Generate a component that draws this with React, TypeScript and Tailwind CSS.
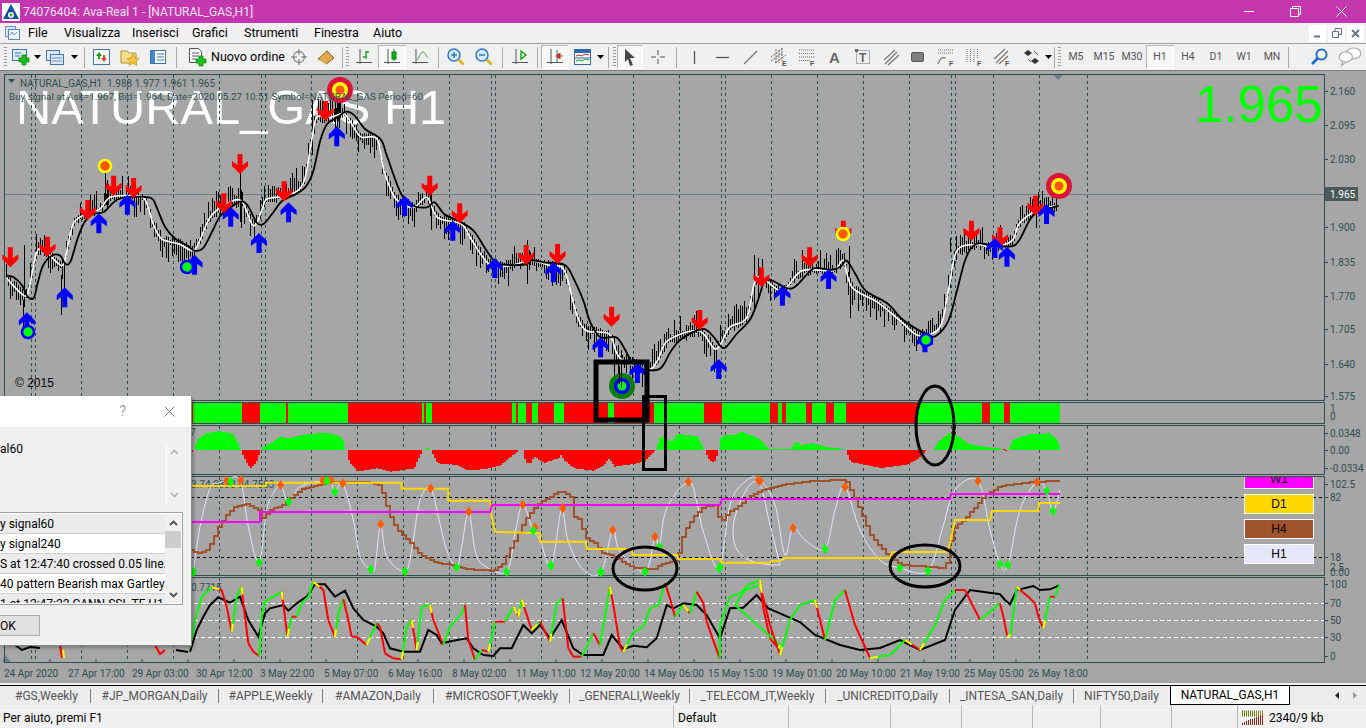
import React from "react";

type P = [number, number];
const A = (p: P[]): P[] => p.map(([x, y]) => [x / 2.904, 74 + y / 3]);
const B = (p: P[]): P[] => p.map(([x, y]) => [530 + x / 2.904, 74 + y / 3]);
const C = (p: P[]): P[] => p.map(([x, y]) => [190 + x / 3, 400 + y / 3]);
const D = (p: P[]): P[] => p.map(([x, y]) => [540 + x / 3, 475 + y / 3]);
const E = (p: P[]): P[] => p.map(([x, y]) => [1000 + x / 3, 390 + y / 3]);
const F = (p: P[]): P[] => p.map(([x, y]) => [560 + x / 3, 340 + y / 3]);
const pts = (p: P[]) => p.map(([x, y]) => `${x.toFixed(1)},${y.toFixed(1)}`).join(" ");
const hash = (n: number) => {
  const s = Math.sin(n * 12.9898) * 43758.5453;
  return s - Math.floor(s);
};
const interp = (p: P[], x: number) => {
  if (x <= p[0][0]) return p[0][1];
  for (let i = 1; i < p.length; i++) {
    if (x <= p[i][0]) {
      const d = p[i][0] - p[i - 1][0] || 1;
      return p[i - 1][1] + ((p[i][1] - p[i - 1][1]) * (x - p[i - 1][0])) / d;
    }
  }
  return p[p.length - 1][1];
};
const smooth = (p: P[]) => {
  let d = `M${p[0][0].toFixed(1)} ${p[0][1].toFixed(1)}`;
  for (let i = 0; i < p.length - 1; i++) {
    const p0 = p[i - 1] || p[i], p1 = p[i], p2 = p[i + 1], p3 = p[i + 2] || p2;
    const cx1 = Math.min(Math.max(p1[0] + (p2[0] - p0[0]) / 6, p1[0]), p2[0]);
    const cy1 = p1[1] + (p2[1] - p0[1]) / 6;
    const cx2 = Math.min(Math.max(p2[0] - (p3[0] - p1[0]) / 6, p1[0]), p2[0]);
    const cy2 = p2[1] - (p3[1] - p1[1]) / 6;
    d += `C${cx1.toFixed(1)} ${cy1.toFixed(1)} ${cx2.toFixed(1)} ${cy2.toFixed(1)} ${p2[0].toFixed(1)} ${p2[1].toFixed(1)}`;
  }
  return d;
};
const stair = (p: P[], step: number) => {
  let d = `M${p[0][0].toFixed(0)} ${p[0][1].toFixed(0)}`;
  for (let x = p[0][0] + step; x < p[p.length - 1][0]; x += step) {
    d += `H${x.toFixed(0)}V${interp(p, x).toFixed(0)}`;
  }
  d += `H${p[p.length - 1][0].toFixed(0)}V${p[p.length - 1][1].toFixed(0)}`;
  return d;
};
const hist = (p: P[], zero: number) => {
  let d = `M${p[0][0].toFixed(0)} ${zero}`;
  for (let x = p[0][0]; x < p[p.length - 1][0]; x += 2) {
    d += `H${x.toFixed(0)}V${interp(p, x).toFixed(0)}`;
  }
  return d + `H${p[p.length - 1][0].toFixed(0)}V${zero}Z`;
};

const GRID = [31, 35, 81, 127, 173, 219, 261, 265, 311, 357, 403, 449, 491, 495, 541, 587, 633, 679, 721, 725, 771, 817, 863, 909, 951, 955, 993, 1039, 1087];

const blackLine: P[] = [
  ...A([[18,604],[40,610],[65,635],[80,668],[98,672],[110,625],[125,575],[150,545],[175,545],[190,570],[205,562],[225,495],[245,445],[270,420],[300,415],[320,395],[345,375],[400,368],[440,373],[455,400],[480,460],[510,495],[545,515],[565,530],[590,522],[615,475],[640,425],[670,400],[700,382],[720,395],[745,445],[765,450],[790,420],[820,380],[860,360],[890,335],[910,290],[930,200],[950,150],[980,130],[1005,113],[1030,125],[1060,165],[1105,195],[1125,250],[1165,360],[1200,395],[1240,400],[1262,385],[1290,420],[1330,440],[1375,470],[1410,525],[1440,565],[1480,573],[1530,570]]),
  ...B([[0,558],[40,565],[100,572],[125,610],[155,680],[175,745],[205,790],[250,790],[275,825],[300,870],[340,888],[380,882],[410,830],[440,795],[500,765],[530,785],[555,818],[570,818],[600,780],[640,735],[665,670],[680,622],[700,618],[745,642],[770,638],[810,595],[830,582],[880,587],[905,575],[920,560],[945,600],[975,650],[1040,690],[1080,735],[1150,780],[1180,785],[1215,740],[1240,650],[1265,555],[1295,510],[1350,515],[1410,512],[1450,440],[1475,415],[1535,395]]),
];
const whiteLine: P[] = [
  ...A([[18,612],[70,665],[85,640],[105,540],[125,525],[165,565],[185,570],[200,500],[215,445],[250,420],[290,405],[320,370],[380,365],[420,375],[445,450],[470,495],[520,510],[560,530],[580,500],[610,430],[650,395],[700,380],[735,455],[760,410],[775,375],[830,365],[880,330],[905,200],[920,130],[960,130],[1000,120],[1030,165],[1050,190],[1095,195],[1115,290],[1150,375],[1200,400],[1240,370],[1270,430],[1340,450],[1365,490],[1420,570],[1480,575],[1530,560]]),
  ...B([[0,558],[60,575],[100,590],[135,720],[165,770],[230,780],[260,850],[340,885],[370,860],[400,800],[490,770],[540,825],[580,760],[630,730],[660,610],[730,650],[790,590],[880,590],[910,560],[935,640],[1010,685],[1080,745],[1130,785],[1190,760],[1215,650],[1240,530],[1300,512],[1340,520],[1400,500],[1420,450],[1470,410],[1530,395]]),
];
const spikes: number[][] = [
  [105,170,205],[107,180,210],[240,170,222],[241,190,228],[335,100,140],[337,90,135],[339,90,128],[312,100,155],[430,185,212],[431,190,230],[527,240,284],[529,250,270],
  [614,336,384],[618,345,392],[621,350,397],[714,350,372],[849,246,277],[850,280,318],[754,255,312],[758,258,300],[24,245,300],[23,300,330],[64,265,300],[61,275,315],[36,240,255],[190,240,255],[1036,206,228],[950,238,252],
];
const candleD = (() => {
  let d = "";
  for (let x = 6; x < 1058; x += 2) {
    const y = interp(whiteLine, x);
    const prev = interp(whiteLine, x - 10);
    const fall = y > prev ? 1 : 0;
    const t = y - 1 - hash(x) * (fall ? 5 : 20);
    const b = y + 1 + hash(x + 0.37) * (fall ? 20 : 5);
    d += `M${x + 0.5} ${t.toFixed(0)}V${b.toFixed(0)}`;
  }
  spikes.forEach(([x, t, b]) => (d += `M${x + 0.5} ${t}V${b}`));
  return d;
})();

const redArrows: P[] = [
  ...A([[30,550],[138,518],[255,408],[330,335],[388,342],[650,388],[697,270],[825,352],[945,110],[1248,335],[1335,418],[1528,543]]),
  ...B([[80,540],[237,728],[493,738],[672,610],[812,550],[910,470],[1282,470],[1365,490],[1468,395]]),
];
const blueArrows: P[] = [
  ...A([[78,745],[188,670],[287,448],[370,392],[565,572],[670,428],[752,507],[838,415],[978,187],[1175,395],[1315,470],[1437,582]]),
  ...B([[68,595],[205,820],[312,897],[548,885],[733,665],[867,615],[1147,805],[1350,522],[1385,548],[1500,420]]),
];

const barBounds = [193,242,260,286,288,348,422,424,426,432,512,516,518,526,532,538,554,564,608,614,654,704,722,770,778,782,786,806,812,826,834,846,918,982,990,1004,1010,1060];

const greenHist: P[][] = [
  C([[10,150],[20,120],[45,100],[85,93],[125,100],[140,125],[150,150]]),
  C([[210,150],[215,140],[240,130],[265,110],[290,115],[330,105],[400,98],[440,105],[455,115],[465,150]]),
  C([[700,150],[710,143],[718,150]]),
  F([[284,330],[295,295],[310,288],[330,305],[350,282],[380,285],[410,290],[430,330]]),
  F([[475,330],[482,287],[520,285],[545,275],[580,290],[600,300]]),
  [[760,440],[768,449],[790,449],[795,441],[800,445],[812,443],[825,447],[845,449]],
  [[932,450],[937,442],[948,433],[958,437],[968,444],[985,447],[1003,449]],
  E([[25,178],[35,150],[60,140],[90,132],[150,130],[170,150],[180,178]]),
];
const redHist: P[][] = [
  C([[0,150],[2,172],[8,150]]),
  C([[150,150],[160,175],[178,205],[195,190],[210,150]]),
  C([[468,150],[475,185],[500,215],[560,205],[600,215],[670,205],[695,150]]),
  C([[720,150],[740,190],[800,195],[830,210],[880,208],[930,195],[985,150]]),
  C([[996,150],[1005,190],[1020,190],[1030,170],[1060,190],[1090,178],[1110,172]]),
  F([[0,345],[10,360],[40,385],[100,392],[130,375],[145,355],[160,380],[190,375],[220,372],[250,365],[270,345],[284,330]]),
  F([[432,330],[445,360],[460,368],[475,330]]),
  [[845,450],[850,462],[880,468],[905,465],[918,458],[926,450]],
  E([[10,178],[15,185],[22,180]]),
];

const to780 = (p: P[]) => p.filter((q) => q[0] < 540);
const magenta: P[] = [[190,522],[260,522],[260,512],[490,512],[492,505],[720,505],[722,499],[950,499],[951,494],[1060,494]];
const yellow: P[] = [
  ...to780(C([[0,258],[228,258],[228,248],[635,248],[635,266],[775,266],[775,302],[900,302],[905,350],[915,395],[1050,395]])),
  ...D([[0,175],[0,200],[137,200],[140,222],[275,222],[278,240],[412,240],[415,252],[540,252],[545,263],[690,263],[695,258],[720,258]]),
  [785,558],[890,558],[892,552],[948,552],[955,520],[990,520],[992,511],[1038,511],[1039,503],[1060,503],
];
const brown: P[] = [
  ...to780(C([[0,450],[20,458],[45,455],[65,425],[85,380],[105,350],[130,320],[170,312],[205,330],[215,355],[245,325],[270,320],[300,295],[340,265],[400,250],[440,245],[520,245],[570,258],[580,295],[600,350],[620,390],[660,430],[690,465],[730,485],[800,500],[850,510],[910,512],[935,495],[965,435],[1010,350]])),
  ...D([[0,80],[30,65],[55,50],[70,50],[95,70],[100,125],[120,135],[125,160],[140,195],[160,200],[185,235],[210,240],[250,262],[280,278],[340,282],[370,265],[410,258],[420,200],[440,155],[465,120],[490,95],[530,90],[535,135],[550,135],[560,115],[600,90],[625,65],[680,40],[720,30]]),
  [810,481],[845,480],[855,500],[870,535],[885,553],[900,565],[945,568],[952,530],[965,518],[985,495],[1000,486],[1030,482],[1060,481],
];
const thinWhite: P[] = [
  ...to780(C([[10,515],[30,380],[60,265],[85,250],[105,242],[150,240],[175,380],[207,487],[230,330],[250,280],[272,256],[295,305],[330,260],[395,242],[420,240],[435,275],[458,250],[490,360],[510,470],[542,508],[555,500],[572,373],[590,470],[645,514],[665,450],[690,300],[722,265],[745,350],[770,450],[800,502],[815,440],[836,335],[855,450],[880,495],[950,515],[975,400],[998,314],[1030,392]])),
  ...D([[0,195],[33,272],[60,120],[68,100],[85,200],[130,285],[183,292],[218,165],[240,230],[315,290],[345,185],[358,215],[380,100],[445,20],[470,80],[490,170],[537,280],[570,90],[610,25],[655,15],[690,150],[720,270]]),
  [733,530],[745,492],[760,481],[775,505],[785,555],[793,528],[805,540],[825,549],[835,510],[845,487],[860,530],[880,560],[900,568],[928,571],[942,530],[955,490],[978,481],[990,530],[1000,564],[1008,565],[1020,510],[1037,482],[1047,491],[1053,511],[1060,490],
];
const orangeD: P[] = [
  ...to780(C([[110,242],[152,240],[272,256],[398,241],[423,240],[458,250],[572,373],[722,265],[836,335],[998,314],[1035,382]])),
  ...C([[1118,325]]),
  ...D([[68,100],[218,165],[345,185],[445,20],[655,15]]),
  [760,481],[793,528],[845,487],[978,481],[1037,482],
];
const greenD: P[] = [
  ...to780(C([[10,516],[122,245],[207,487],[296,305],[411,243],[435,275],[542,508],[645,514],[800,502],[950,515],[1030,392]])),
  ...C([[1083,496],[1232,515]]),
  ...D([[33,272],[183,292],[315,290],[358,215],[537,280]]),
  [825,549],[900,568],[928,571],[1000,564],[1008,565],[1047,491],[1053,511],[720,567],
];

const multi: P[] = [
  ...to780(C([[0,740],[15,660],[35,590],[65,562],[95,570],[110,620],[125,695],[140,590],[155,560],[160,610],[175,730],[190,755],[208,768],[215,650],[225,605],[275,575],[285,650],[292,710],[305,650],[320,650],[335,610],[355,590],[370,545],[400,570],[415,660],[435,712],[445,640],[460,598],[475,660],[485,710],[500,710],[530,735],[560,670],[570,680],[585,760],[610,775],[635,778],[650,680],[665,660],[680,750],[695,620],[720,615],[730,660],[760,735],[780,680],[815,640],[825,615],[835,720],[855,780],[875,750],[895,755],[915,665],[945,665],[970,620],[985,650],[995,598],[1025,690]])),
  ...D([[0,440],[30,500],[50,385],[68,370],[85,520],[100,545],[125,545],[160,475],[180,510],[210,335],[220,390],[240,515],[250,530],[280,472],[310,455],[330,400],[355,390],[375,325],[390,370],[405,425],[430,390],[450,415],[470,350],[490,385],[500,440],[539,550],[540,450],[570,365],[600,355],[625,330],[660,315],[670,400],[690,490],[715,520],[720,510]]),
  [735,605],[745,590],[760,585],[770,625],[780,655],[790,620],[800,605],[815,600],[825,640],[835,600],[845,590],[855,625],[870,658],[890,655],[905,640],[920,650],[935,625],[945,600],[955,590],[965,590],[980,620],
  ...E([[0,640],[10,680],[22,740],[32,735],[50,590],[60,600],[85,620],[105,640],[115,680],[130,715],[150,620],[165,620],[178,585]]),
];
const blackStoch: P[] = [
  ...to780(C([[0,755],[20,690],[40,650],[60,615],[85,592],[120,608],[150,590],[175,660],[205,710],[225,640],[240,625],[280,615],[295,632],[320,610],[350,590],[375,553],[405,553],[435,590],[465,572],[490,625],[520,660],[560,680],[580,700],[600,745],[640,755],[690,755],[715,690],[740,705],[755,730],[790,722],[830,715],[850,745],[880,765],[910,768],[930,745],[965,745],[1000,675],[1025,700]])),
  ...D([[0,450],[30,490],[65,435],[100,520],[130,540],[190,540],[215,480],[250,522],[280,512],[320,517],[350,490],[380,390],[400,400],[430,385],[470,390],[500,420],[540,490],[570,400],[610,398],[650,360],[685,400],[720,415]]),
  [800,622],[815,635],[840,645],[860,650],[880,648],[900,640],[920,650],[945,640],[955,610],[970,590],
  ...E([[0,613],[15,630],[30,643],[50,600],[100,588],[120,600],[150,598],[178,586]]),
];
const multiSegs = (() => {
  const out: { a: P; b: P; c: string }[] = [];
  for (let i = 1; i < multi.length; i++) {
    const a = multi[i - 1], b = multi[i];
    out.push({ a, b, c: b[1] < a[1] ? "#00ff00" : "#ff0000" });
  }
  for (let i = 1; i < multi.length - 1; i++) {
    const a = multi[i - 1], m = multi[i], b = multi[i + 1];
    if ((m[1] - a[1]) * (b[1] - m[1]) < 0 && hash(i) > 0.3) {
      const len = Math.hypot(b[0] - m[0], b[1] - m[1]) || 1;
      const t = Math.min(1, 8 / len);
      out.push({ a: m, b: [m[0] + (b[0] - m[0]) * t, m[1] + (b[1] - m[1]) * t], c: "#ffff00" });
    }
  }
  return out;
})();

const Grid = ({ y1, y2 }: { y1: number; y2: number }) => (
  <path d={GRID.map((x) => `M${x + 0.5} ${y1}V${y2}`).join("")} stroke="#2f4f4f" strokeWidth={1} strokeDasharray="3 3" fill="none" />
);
const AxisText = ({ y, t }: { y: number; t: string }) => (
  <text x={1330} y={y + 3.5} fontSize={10} fill="#2f4f4f">{t}</text>
);
const Tick = ({ y }: { y: number }) => <path d={`M1324 ${y + 0.5}H1328`} stroke="#2f4f4f" />;

const Pane = ({ y, h, cls, children }: { y: number; h: number; cls: string; children: React.ReactNode }) => (
  <div className={`relative ml-[4px] w-[1321px] border border-[#2f4f4f] ${cls}`}>
    <svg viewBox={`5 ${y + 1} 1319 ${h - 2}`} width={1319} height={h - 2} className="block overflow-visible font-[family-name:Roboto,sans-serif]">
      {children}
    </svg>
  </div>
);

const UpArrow = ({ x, y }: { x: number; y: number }) => (
  <path d={`M${x} ${y - 10}l8 8l0 5l-5.500 -4v11h-5v-11l-5.500 4l0 -5z`} fill="#0000ff" />
);
const DownArrow = ({ x, y }: { x: number; y: number }) => (
  <path d={`M${x} ${y + 10}l8 -8l0 -5l-5.500 4v-11h-5v11l-5.500 -4l0 5z`} fill="#ff0000" />
);
const Diamond = ({ x, y, c }: { x: number; y: number; c: string }) => (
  <path d={`M${x} ${y - 5}l3.500 5l-3.500 5l-3.500 -5z`} fill={c} />
);

const MainChart = () => (
  <Pane y={74} h={327} cls="h-[327px]">
    <text x={16} y={124} fontSize={48.8} fill="#ffffff" className="font-[family-name:'Liberation_Sans',sans-serif]">NATURAL_GAS H1</text>
    <text x={1195} y={122} fontSize={51} fill="#00ff00" className="font-[family-name:'Liberation_Sans',sans-serif]">1.965</text>
    <Grid y1={75} y2={400} />
    <path d="M5 194.500H1324" stroke="#6e7f80" />
    <path d={candleD} stroke="#000000" strokeWidth={1} fill="none" />
    <path d={smooth(whiteLine)} fill="none" stroke="#ffffff" strokeWidth={1.6} />
    <path d={smooth(blackLine)} fill="none" stroke="#000000" strokeWidth={1.8} />
    {redArrows.map(([x, y], i) => <DownArrow key={i} x={x} y={y} />)}
    {blueArrows.map(([x, y], i) => <UpArrow key={i} x={x} y={y} />)}
    {[[28,332],[187,267],[926,340]].map(([x, y], i) => (
      <circle key={i} cx={x} cy={y} r={6} fill="#00ff00" stroke="#0000ff" strokeWidth={2.5} />
    ))}
    {[[105,166],[843,234]].map(([x, y], i) => (
      <circle key={i} cx={x} cy={y} r={6} fill="#ff5500" stroke="#ffff00" strokeWidth={2.5} />
    ))}
    {[[340,90],[1059,186]].map(([x, y], i) => (
      <g key={i}>
        <circle cx={x} cy={y} r={13} fill="#dc143c" />
        <circle cx={x} cy={y} r={8} fill="#ffff00" />
        <circle cx={x} cy={y} r={4.5} fill="#ff5500" />
      </g>
    ))}
    <circle cx={622} cy={386} r={13} fill="#0a7d0a" />
    <circle cx={622} cy={386} r={8} fill="#0000ff" />
    <circle cx={622} cy={386} r={4.5} fill="#00ff00" />
    <path d="M621.500 372V388M619.500 366V384" stroke="#000" />
    <path d="M8 79h7l-3.500 4z" fill="#2f4f4f" />
    <text x={20} y={86.5} fontSize={10} fill="#2f4f4f" xmlSpace="preserve">NATURAL_GAS,H1  1.988 1.977 1.961 1.965</text>
    <text x={9} y={99.5} fontSize={9.85} fill="#2f4f4f">Buy signal at Ask=1.967, Bid=1.964, Date=2020.05.27 10:51 Symbol=NATURAL_GAS Period=60</text>
    <text x={15} y={387} fontSize={12} fill="#000000" className="font-[family-name:'Liberation_Sans',sans-serif]">© 2015</text>
    <path d="M1053 75h10l-5 5z" fill="#708090" />
    {[[91,"2.160"],[125,"2.095"],[159,"2.030"],[227,"1.900"],[262,"1.835"],[296,"1.770"],[329,"1.705"],[364,"1.640"],[396,"1.575"]].map(([y, t]) => (
      <g key={t as string}><Tick y={y as number} /><AxisText y={y as number} t={t as string} /></g>
    ))}
    <path d="M1325 187H1358V201H1325Z" fill="#4a5a5a" />
    <text x={1330} y={197.5} fontSize={10} fill="#ffffff">1.965</text>
  </Pane>
);

const SignalBar = () => (
  <Pane y={402} h={22} cls="h-[22px] mt-[1px]">
    {barBounds.map((x, i) => {
      const s = i === 0 ? 190 : barBounds[i - 1];
      return <rect key={i} x={s} y={403} width={x - s} height={20} fill={i % 2 === 0 ? "#ff0000" : "#00ff00"} />;
    })}
    <AxisText y={408} t="1" />
    <AxisText y={416} t="0" />
  </Pane>
);

const HistPane = () => (
  <Pane y={425} h={50} cls="h-[50px] mt-[1px]">
    <Grid y1={426} y2={474} />
    {greenHist.map((p, i) => <path key={i} d={hist(p, 450)} fill="#00ff00" />)}
    {redHist.map((p, i) => <path key={i} d={hist(p, 450)} fill="#ff0000" />)}
    <text x={190} y={436} fontSize={10} fill="#2f4f4f">7</text>
    {[[433,"0.0348"],[450,"0.00"],[468,"-0.0334"]].map(([y, t]) => (
      <g key={t as string}><Tick y={y as number} /><AxisText y={y as number} t={t as string} /></g>
    ))}
  </Pane>
);

const Legend = ({ t, cls }: { t: string; cls: string }) => (
  <div className={`flex h-[20px] w-[70px] shrink-0 items-center justify-center border border-white text-[12px] text-black ${cls}`}>{t}</div>
);

const StochPane = () => (
  <Pane y={476} h={100} cls="h-[100px] mt-[1px]">
    <Grid y1={477} y2={575} />
    <path d="M5 497.500H1324M5 557.500H1324" stroke="#000" strokeDasharray="3 3" fill="none" />
    <text x={191} y={488} fontSize={10} fill="#2f4f4f">3.74.9330 84.7503</text>
    <path d={smooth(thinWhite)} fill="none" stroke="#e6e6fa" strokeWidth={1} />
    <path d={stair(brown, 4)} fill="none" stroke="#a0522d" strokeWidth={2} />
    <polyline points={pts(yellow)} fill="none" stroke="#ffd700" strokeWidth={2} />
    <polyline points={pts(magenta)} fill="none" stroke="#ff00ff" strokeWidth={2} />
    {orangeD.map(([x, y], i) => <Diamond key={i} x={x} y={y} c="#ff5a00" />)}
    {greenD.map(([x, y], i) => <Diamond key={i} x={x} y={y} c="#00ff00" />)}
    <Tick y={484} /><AxisText y={484} t="102.5" />
    <Tick y={497} /><AxisText y={497} t="82" />
    <Tick y={557} /><AxisText y={557} t="18" />
    <AxisText y={567} t="2.5" />
    <AxisText y={572} t="0.00" />
  </Pane>
);

const LegendBox = () => (
  <div className="absolute left-[1240px] top-[-8px] flex flex-col gap-[5px] font-[family-name:'Liberation_Sans',sans-serif]">
    <Legend t="W1" cls="bg-[#ff00ff]" />
    <Legend t="D1" cls="bg-[#ffd700]" />
    <Legend t="H4" cls="bg-[#a0522d]" />
    <Legend t="H1" cls="bg-[#e6e6fa]" />
  </div>
);

const StochWrap = () => (
  <div className="relative">
    <StochPane />
    <div className="absolute left-[4px] top-[2px] h-[98px] w-[1320px] overflow-hidden">
      <div className="relative h-full w-full">
        <LegendBox />
      </div>
    </div>
  </div>
);

const RsiPane = () => (
  <Pane y={577} h={86} cls="h-[86px] mt-[1px]">
    <Grid y1={578} y2={662} />
    <path d="M5 603.500H1324M5 620.500H1324M5 637.500H1324" stroke="#ffffff" strokeDasharray="4 3" fill="none" />
    <text x={191} y={591} fontSize={10} fill="#2f4f4f">0.7715</text>
    <polyline points={pts(blackStoch)} fill="none" stroke="#000" strokeWidth={2} />
    {multiSegs.map((s, i) => (
      <line key={i} x1={s.a[0]} y1={s.a[1]} x2={s.b[0]} y2={s.b[1]} stroke={s.c} strokeWidth={2} />
    ))}
    <polyline points="15,645 22,650 30,647 40,648" fill="none" stroke="#000" strokeWidth={2} />
    <polyline points="60,645 62,658" fill="none" stroke="#ff0000" strokeWidth={2} />
    <polyline points="63,650 64,658" fill="none" stroke="#ffff00" strokeWidth={2} />
    <polyline points="155,645 160,654 165,650" fill="none" stroke="#ff0000" strokeWidth={2} />
    <polyline points="176,650 188,652" fill="none" stroke="#000" strokeWidth={2} />
    {[[584,"100"],[603,"70"],[620,"50"],[637,"30"],[656,"0"]].map(([y, t]) => (
      <g key={t as string}><Tick y={y as number} /><AxisText y={y as number} t={t as string} /></g>
    ))}
    <path d={Array.from({ length: 23 }, (_, i) => `M${4 + i * 46} 659V662`).join("")} stroke="#2f4f4f" />
    <path d="M5 655V662H11Z" fill="#708090" />
  </Pane>
);

const TIMES = ["24 Apr 2020","27 Apr 17:00","29 Apr 03:00","30 Apr 12:00","3 May 22:00","5 May 07:00","6 May 16:00","8 May 02:00","11 May 11:00","12 May 20:00","14 May 06:00","15 May 15:00","19 May 01:00","20 May 10:00","21 May 19:00","25 May 05:00","26 May 18:00"];

const Annotations = () => (
  <svg className="pointer-events-none absolute left-0 top-0 h-[728px] w-[1366px]" viewBox="0 0 1366 728" fill="none" stroke="#000">
    <rect x={596} y={362} width={51} height={58} strokeWidth={5} />
    <rect x={643.5} y={396.5} width={22} height={73} strokeWidth={3} />
    <ellipse cx={935} cy={425.5} rx={19} ry={39.5} strokeWidth={3} />
    <ellipse cx={645} cy={568.5} rx={32} ry={21.5} strokeWidth={3} />
    <ellipse cx={925} cy={566} rx={35} ry={21} strokeWidth={3} />
  </svg>
);

/* ---------- toolbar icons ---------- */
const Ico = ({ children, s = 20 }: { children: React.ReactNode; s?: number }) => (
  <svg width={s} height={s} viewBox="0 0 20 20" className="block shrink-0 font-[family-name:'Liberation_Sans',sans-serif]">{children}</svg>
);
const Caret = () => <svg width={7} height={4} viewBox="0 0 7 4" className="block shrink-0"><path d="M0 0h7l-3.500 4z" fill="#000" /></svg>;
const Plus = ({ x, y }: { x: number; y: number }) => (
  <path d={`M${x + 3} ${y}h4v3h3v4h-3v3h-4v-3h-3v-4h3z`} fill="#19c219" stroke="#0b7d0b" strokeWidth={0.7} />
);
const IcoNew = () => (
  <Ico>
    <rect x={1.5} y={2.5} width={14} height={11} fill="#dbe8f6" stroke="#3f74ad" />
    <path d="M4 6h6M4 9h5" stroke="#3f74ad" />
    <Plus x={8} y={8} />
  </Ico>
);
const IcoProfile = () => (
  <Ico>
    <rect x={1.5} y={3.5} width={13} height={10} fill="#dbe8f6" stroke="#3f74ad" />
    <rect x={5.5} y={7.5} width={13} height={10} fill="#dbe8f6" stroke="#3f74ad" />
    <path d="M7 11h10M7 14h10" stroke="#6b93bf" />
  </Ico>
);
const IcoWatch = () => (
  <Ico>
    <rect x={1.5} y={2.5} width={16} height={15} fill="#f3f7fb" stroke="#3f74ad" />
    <path d="M7 5l3 4h-2v3h-2v-3h-2z" fill="#19a019" />
    <path d="M12 15l3 -4h-2v-3h-2v3h-2z" fill="#d84a1b" />
  </Ico>
);
const IcoStar = () => (
  <Ico>
    <path d="M1 4h6l2 2h7v10h-15z" fill="#f5de8c" stroke="#a8903f" />
    <path d="M13 7l2 4l4 .5l-3 3l1 4l-4 -2l-4 2l1 -4l-3 -3l4 -.5z" fill="#f3c53a" stroke="#b08a1e" strokeWidth={0.6} />
  </Ico>
);
const IcoNav = () => (
  <Ico>
    <rect x={2.5} y={3.5} width={15} height={13} fill="#fff" stroke="#3f74ad" />
    <rect x={3} y={4} width={4} height={12} fill="#3f8ad6" />
    <path d="M9 7h7M9 10h7M9 13h7" stroke="#3f74ad" />
  </Ico>
);
const IcoOrder = () => (
  <Ico>
    <path d="M2.500 1.500h9l3 3v11h-12z" fill="#fff" stroke="#555" />
    <path d="M5 6h7M5 9h7M5 12h4" stroke="#555" />
    <Plus x={9} y={9} />
  </Ico>
);
const IcoTarget = () => (
  <Ico>
    <circle cx={10} cy={10} r={5.5} fill="none" stroke="#8a8a8a" strokeWidth={1.3} />
    <path d="M10 2v6M10 12v6M2 10h6M12 10h6" stroke="#6f6f6f" />
  </Ico>
);
const IcoAuto = () => (
  <Ico>
    <path d="M2 12l9 -8l7 7l-8 6z" fill="#e2a94a" stroke="#8a5f1d" />
    <path d="M3 13l7 4" stroke="#f9e3b0" />
  </Ico>
);
const Axes = () => <path d="M6 2v15M2 15.500h16" stroke="#555" fill="none" />;
const IcoBars = () => (<Ico><Axes /><path d="M12 4v8M12 5h3M9 10h3" stroke="#12a012" strokeWidth={1.3} fill="none" /></Ico>);
const IcoCandle = () => (<Ico><Axes /><rect x={10} y={5} width={4} height={7} fill="#19b019" stroke="#0b7d0b" /><path d="M12 2v3M12 12v2" stroke="#0b7d0b" /></Ico>);
const IcoLine = () => (<Ico><Axes /><path d="M7 13c2 -1 3 -8 6 -8c2 0 3 4 5 6" stroke="#3ea35a" fill="none" /></Ico>);
const IcoZoom = ({ plus }: { plus: boolean }) => (
  <Ico>
    <circle cx={8} cy={8} r={6} fill="#d6eaf9" stroke="#2e7ac2" strokeWidth={1.5} />
    <path d="M5 8h6" stroke="#2e7ac2" strokeWidth={1.5} />
    {plus && <path d="M8 5v6" stroke="#2e7ac2" strokeWidth={1.5} />}
    <path d="M12.500 12.500l5 5" stroke="#d9b52a" strokeWidth={3} />
  </Ico>
);
const IcoShift = () => (<Ico><Axes /><path d="M11 4l5 4l-5 4z" fill="none" stroke="#12a012" strokeWidth={1.4} /></Ico>);
const IcoScroll = () => (<Ico><Axes /><path d="M12 3v12" stroke="#2f6aa8" /><path d="M18 9h-3M15 6l-4 3l4 3z" fill="#c4381a" stroke="#c4381a" /></Ico>);
const IcoTpl = () => (
  <Ico>
    <rect x={1.5} y={2.5} width={16} height={15} fill="#f3f7fb" stroke="#2f6aa8" />
    <rect x={2} y={3} width={15} height={3} fill="#2f6aa8" />
    <path d="M3 9l3 -1l3 1l3 -2l4 1" stroke="#c4381a" fill="none" />
    <path d="M3 14l3 -1l3 1l3 -2l4 1" stroke="#19a019" fill="none" />
    <path d="M2 11h15" stroke="#2f6aa8" />
  </Ico>
);
const IcoCursor = () => (<Ico><path d="M5 2l10 9h-5l3 7l-3 1l-2 -7l-3 3z" fill="#444" /></Ico>);
const IcoCross = () => (<Ico><path d="M10 3v5M10 12v5M3 10h5M12 10h5" stroke="#555" /></Ico>);
const IcoV = () => (<Ico><path d="M10.500 4v13" stroke="#555" strokeWidth={1.3} /></Ico>);
const IcoH = () => (<Ico><path d="M3 10.500h13" stroke="#555" strokeWidth={1.3} /></Ico>);
const IcoT = () => (<Ico><path d="M3 17l13 -13" stroke="#777" strokeWidth={1.3} /></Ico>);
const Lt = ({ t, x = 13, y = 19, s = 7 }: { t: string; x?: number; y?: number; s?: number }) => (
  <text x={x} y={y} fontSize={s} fontWeight={700} fill="#555">{t}</text>
);
const IcoE = () => (
  <Ico>
    <path d="M2 14l11 -8M2 10l11 -8M6 16l11 -8M7 2v14M10 3v13M13 1v13" stroke="#666" strokeDasharray="2 1" fill="none" />
    <Lt t="E" />
  </Ico>
);
const IcoFLines = () => (
  <Ico>
    <path d="M2 3h15M2 6.500h15M2 10h15M2 13.500h12" stroke="#666" strokeDasharray="1 1" />
    <Lt t="F" />
  </Ico>
);
const IcoA = () => (<Ico><text x={4} y={16} fontSize={15} fontWeight={700} fill="#666">A</text></Ico>);
const IcoTx = () => (
  <Ico>
    <rect x={3.5} y={3.5} width={13} height={13} fill="none" stroke="#666" strokeDasharray="1 1" />
    <path d="M2 2h3v3h-3z" fill="#666" />
    <text x={6} y={15} fontSize={12} fontWeight={700} fill="#666">T</text>
  </Ico>
);
const IcoCh = () => (<Ico><path d="M3 13l11 -10M4 17l12 -12M7 18l11 -10" stroke="#777" strokeWidth={1.2} fill="none" /></Ico>);
const IcoRect = () => (<Ico><rect x={3.5} y={5.5} width={12} height={9} rx={1.5} fill="#808080" stroke="#555" /></Ico>);
const IcoFArc = () => (
  <Ico>
    <path d="M2 3h15M2 6h15" stroke="#666" strokeDasharray="1 1" />
    <path d="M2 17c2 -6 4 -7 8 -6" stroke="#777" fill="none" strokeWidth={1.2} />
    <Lt t="F" />
  </Ico>
);
const IcoFV = () => (
  <Ico>
    <path d="M3 2v14M6.500 2v14M10 2v14M13.500 2v10" stroke="#666" strokeDasharray="1 1" />
    <Lt t="F" />
  </Ico>
);
const IcoFD = () => (
  <Ico>
    <path d="M2 12l11 -10M4 16l12 -12M7 17l9 -8" stroke="#777" strokeWidth={1.2} fill="none" />
    <Lt t="F" />
  </Ico>
);
const IcoMore = () => (
  <Ico>
    <path d="M5 3l4 3l-4 3l-4 -3zM12 11l4 3l-4 3l-4 -3z" fill="#333" />
    <path d="M5 12l3 3M11 4l4 4" stroke="#555" />
  </Ico>
);
const IcoSearch = () => (<Ico><circle cx={11.5} cy={7.5} r={5} fill="#fff" stroke="#1e6cc8" strokeWidth={2} /><path d="M8 11l-6 6" stroke="#1e6cc8" strokeWidth={2.6} /></Ico>);
const IcoChat = () => (
  <Ico s={24}>
    <ellipse cx={13} cy={7} rx={6} ry={4.5} fill="#fff" stroke="#aaa" />
    <ellipse cx={6.5} cy={10} rx={5.5} ry={4.2} fill="#fff" stroke="#aaa" />
    <path d="M4 14l-1 3l4 -3" fill="#fff" stroke="#aaa" />
  </Ico>
);

const Grip = ({ cls }: { cls: string }) => (
  <div className={`flex h-[22px] shrink-0 items-center justify-center ${cls}`}>
    <div className="h-[20px] w-[3px] bg-[repeating-linear-gradient(to_bottom,#9a9a9a_0,#9a9a9a_1px,transparent_1px,transparent_3px)]" />
  </div>
);
const Sep = ({ cls }: { cls: string }) => (
  <div className={`flex h-[24px] shrink-0 items-center justify-center ${cls}`}>
    <div className="h-[21px] w-px bg-[#a8a8a8]" />
  </div>
);
const Btn = ({ cls, children, on }: { cls: string; children: React.ReactNode; on?: boolean }) => (
  <div className={`flex h-[24px] shrink-0 items-center justify-center ${cls} ${on ? "border border-t-[#b0b0b0] border-l-[#b0b0b0] border-r-white border-b-white bg-[#f7f7f7]" : ""}`}>{children}</div>
);
const Tf = ({ t, on }: { t: string; on?: boolean }) => (
  <Btn cls="w-[28px] text-[10.5px] text-[#555555]" on={on}>{t}</Btn>
);

const Toolbar = () => (
  <div className="flex h-[27px] items-center border-b border-b-[#808080] bg-[#f0f0f0] pl-[2px] pr-[2px]">
    <Grip cls="w-[6px]" />
    <Btn cls="w-[34px] gap-[3px] pl-[1px]"><IcoNew /><Caret /></Btn>
    <Btn cls="w-[38px] gap-[6px] pl-[1px]"><IcoProfile /><Caret /></Btn>
    <Sep cls="w-[8px]" />
    <Btn cls="w-[28px]"><IcoWatch /></Btn>
    <Btn cls="w-[28px]"><IcoStar /></Btn>
    <Btn cls="w-[28px]"><IcoNav /></Btn>
    <Sep cls="w-[8px]" />
    <Btn cls="w-[106px] justify-start gap-[4px] whitespace-nowrap pl-[7px] text-[12.5px] text-black"><IcoOrder />Nuovo ordine</Btn>
    <Btn cls="w-[26px]"><IcoTarget /></Btn>
    <Btn cls="w-[28px]"><IcoAuto /></Btn>
    <Sep cls="w-[4px]" />
    <Grip cls="w-[6px]" />
    <Btn cls="w-[28px]"><IcoBars /></Btn>
    <Btn cls="w-[28px]" on><IcoCandle /></Btn>
    <Btn cls="w-[28px]"><IcoLine /></Btn>
    <Sep cls="w-[8px]" />
    <Btn cls="w-[28px]"><IcoZoom plus /></Btn>
    <Btn cls="w-[28px]"><IcoZoom plus={false} /></Btn>
    <Sep cls="w-[8px]" />
    <Btn cls="w-[28px]"><IcoShift /></Btn>
    <Sep cls="w-[7px]" />
    <Btn cls="w-[28px]" on><IcoScroll /></Btn>
    <Btn cls="w-[36px] gap-[4px] pl-[2px]"><IcoTpl /><Caret /></Btn>
    <Sep cls="w-[6px]" />
    <Grip cls="w-[6px]" />
    <Btn cls="w-[26px]" on><IcoCursor /></Btn>
    <Btn cls="w-[29px]"><IcoCross /></Btn>
    <Sep cls="w-[8px]" />
    <Btn cls="w-[28px]"><IcoV /></Btn>
    <Btn cls="w-[29px]"><IcoH /></Btn>
    <Btn cls="w-[28px]"><IcoT /></Btn>
    <Btn cls="w-[28px]"><IcoE /></Btn>
    <Btn cls="w-[28px]"><IcoFLines /></Btn>
    <Btn cls="w-[28px]"><IcoA /></Btn>
    <Btn cls="w-[28px]"><IcoTx /></Btn>
    <Btn cls="w-[27px]"><IcoCh /></Btn>
    <Btn cls="w-[28px]"><IcoRect /></Btn>
    <Btn cls="w-[28px]"><IcoFArc /></Btn>
    <Btn cls="w-[28px]"><IcoFV /></Btn>
    <Btn cls="w-[28px]"><IcoFD /></Btn>
    <Btn cls="w-[36px] gap-[2px] pl-[6px]"><IcoMore /><Caret /></Btn>
    <Sep cls="w-[4px]" />
    <Grip cls="w-[6px]" />
    <Tf t="M5" /><Tf t="M15" /><Tf t="M30" /><Tf t="H1" on /><Tf t="H4" /><Tf t="D1" /><Tf t="W1" /><Tf t="MN" />
    <Sep cls="w-[4px]" />
    <div className="ml-auto flex items-center gap-[8px] pr-[2px]">
      <IcoSearch />
      <IcoChat />
    </div>
  </div>
);

const MENU: [string, string][] = [["File","w-[36px]"],["Visualizza","w-[68px]"],["Inserisci","w-[60px]"],["Grafici","w-[52px]"],["Strumenti","w-[70px]"],["Finestra","w-[59px]"],["Aiuto","w-[40px]"]];

const MdiBtn = ({ children }: { children: React.ReactNode }) => (
  <div className="flex h-[17px] w-[17px] items-center justify-center bg-white">{children}</div>
);

const TopBars = () => (
  <>
    <div className="flex h-[23px] items-center bg-[#c336ae] text-[12px] text-[#f4e2f1]">
      <svg width={18} height={18} viewBox="0 0 18 18" className="ml-[2px] block shrink-0">
        <rect width={18} height={18} fill="#fff" />
        <path d="M9 1l8 15h-16z" fill="#14509e" />
        <circle cx={9} cy={12} r={3} fill="#f2f2e0" />
        <circle cx={9} cy={12} r={1.4} fill="#4da63c" />
      </svg>
      <span className="ml-[3px]">74076404: Ava-Real 1 - [NATURAL_GAS,H1]</span>
      <svg width={11} height={11} viewBox="0 0 11 11" className="ml-auto mr-[35px] block shrink-0"><path d="M0 5.500h10" stroke="#fff" /></svg>
      <svg width={11} height={11} viewBox="0 0 11 11" className="mr-[35px] block shrink-0"><path d="M.5 2.500h8v8h-8zM2.500 2.500v-2h8v8h-2" stroke="#fff" fill="none" /></svg>
      <svg width={11} height={11} viewBox="0 0 11 11" className="mr-[19px] block shrink-0"><path d="M.5 .5l10 10M10.500 .5l-10 10" stroke="#fff" /></svg>
    </div>
    <div className="flex h-[21px] items-center border-b border-b-[#a0a0a0] bg-[#f0f0f0] text-[12.5px] text-black">
      <svg width={16} height={16} viewBox="0 0 16 16" className="ml-[4px] mr-[8px] block shrink-0">
        <rect x={1.5} y={1.5} width={10} height={10} fill="#d7e5f5" stroke="#6f93c0" />
        <rect x={4.5} y={4.5} width={11} height={10} fill="#eef4fb" stroke="#5f86b8" />
        <path d="M6 10l2 -3l2 3l3 -3" stroke="#6f93c0" fill="none" />
      </svg>
      {MENU.map(([t, w]) => <div key={t} className={w}>{t}</div>)}
      <div className="ml-auto mr-[2px] flex gap-[2px]">
        <MdiBtn><svg width={9} height={9} viewBox="0 0 9 9"><path d="M1 7.500h6" stroke="#66727f" strokeWidth={2} /></svg></MdiBtn>
        <MdiBtn><svg width={10} height={10} viewBox="0 0 10 10"><path d="M.5 3.500h6v6h-6zM3 3v-2.500h6.500v6h-3" stroke="#66727f" fill="none" /></svg></MdiBtn>
        <MdiBtn><svg width={9} height={9} viewBox="0 0 9 9"><path d="M1 1l7 7M8 1l-7 7" stroke="#66727f" strokeWidth={1.8} /></svg></MdiBtn>
      </div>
    </div>
  </>
);

const TABS: [string, string][] = [["#GS,Weekly","w-[87px]"],["#JP_MORGAN,Daily","w-[127px]"],["#APPLE,Weekly","w-[103px]"],["#AMAZON,Daily","w-[110px]"],["#MICROSOFT,Weekly","w-[135px]"],["_GENERALI,Weekly","w-[119px]"],["_TELECOM_IT,Weekly","w-[135px]"],["_UNICREDITO,Daily","w-[123px]"],["_INTESA_SAN,Daily","w-[123px]"],["NIFTY50,Daily","w-[95px]"]];

const Tabs = () => (
  <div className="flex h-[19px] items-center bg-[#ececec] pl-[3px] text-[12px] text-[#555555]">
    {TABS.map(([t, w], i) => (
      <React.Fragment key={t}>
        <div className={`flex items-center justify-center ${w}`}>{t}</div>
        {i < TABS.length - 1 && <div className="h-[14px] w-px bg-[#808080]" />}
      </React.Fragment>
    ))}
    <div className="ml-[1px] -mt-[1px] flex h-[20px] w-[120px] items-center justify-center border border-black bg-white text-black">NATURAL_GAS,H1</div>
    <div className="ml-auto mr-[9px] flex items-center gap-[14px]">
      <svg width={4} height={7} viewBox="0 0 4 7"><path d="M4 0v7l-4 -3.500z" fill="#222" /></svg>
      <svg width={4} height={7} viewBox="0 0 4 7"><path d="M0 0v7l4 -3.500z" fill="#999" /></svg>
    </div>
  </div>
);

const StatCell = ({ cls, children }: { cls: string; children?: React.ReactNode }) => (
  <div className={`flex h-[23px] shrink-0 items-center border-r border-r-[#b8b8b8] pt-[2px] ${cls}`}>{children}</div>
);

const StatusBar = () => (
  <div className="flex h-[23px] items-center bg-[#f0f0f0] text-[12px] text-black">
    <StatCell cls="w-[674px] pl-[3px]">Per aiuto, premi F1</StatCell>
    <StatCell cls="w-[115px] pl-[4px]">Default</StatCell>
    <StatCell cls="w-[102px]" />
    <StatCell cls="w-[71px]" />
    <StatCell cls="w-[71px]" />
    <StatCell cls="w-[68px]" />
    <StatCell cls="w-[71px]" />
    <StatCell cls="w-[66px]" />
    <svg width={23} height={15} viewBox="0 0 23 15" className="ml-[4px] mt-[2px] block shrink-0">
      {Array.from({ length: 11 }, (_, i) => (
        <g key={i}>
          <rect x={i * 2} y={0.5} width={1} height={6} fill={i < 7 ? "#6e7a10" : "#8a8a30"} />
          <rect x={i * 2} y={15 - Math.round((i + 3) * 0.8)} width={1} height={Math.round((i + 3) * 0.8)} fill="#a0231a" />
        </g>
      ))}
    </svg>
    <span className="ml-[4px] mt-[2px]">2340/9 kb</span>
  </div>
);

const Dialog = () => (
  <div className="absolute left-0 top-[396px] flex h-[250px] w-[192px] flex-col overflow-hidden border-r border-b border-r-[#8a8a8a] border-b-[#8a8a8a] bg-[#f0f0f0] text-[12px] text-black shadow-[2px_2px_3px_rgba(0,0,0,0.25)]">
    <div className="flex h-[31px] shrink-0 items-center justify-end bg-white pr-[16px]">
      <span className="mr-[38px] text-[14px] text-[#a0a0a0]">?</span>
      <svg width={11} height={11} viewBox="0 0 11 11"><path d="M.5 .5l10 10M10.500 .5l-10 10" stroke="#8a8a8a" /></svg>
    </div>
    <div className="flex h-[85px] shrink-0 items-start">
      <div className="flex-1 pt-[13px]">al60</div>
      <div className="mr-[10px] mt-[16px] flex h-[61px] w-[15px] flex-col items-center justify-between border-l border-l-white py-[6px]">
        <svg width={9} height={6} viewBox="0 0 9 6"><path d="M1 5l3.500 -3.500l3.500 3.500" stroke="#b0b0b0" strokeWidth={1.6} fill="none" /></svg>
        <svg width={9} height={6} viewBox="0 0 9 6"><path d="M1 1l3.500 3.500l3.500 -3.500" stroke="#b0b0b0" strokeWidth={1.6} fill="none" /></svg>
      </div>
    </div>
    <div className="flex h-[93px] w-[183px] shrink-0 border border-[#a0a0a0] border-l-0 bg-white p-[1px] pl-0">
      <div className="flex-1 overflow-hidden whitespace-nowrap">
        {[
          ["y signal60", "bg-[#ebebeb]"],
          ["y signal240", "bg-white"],
          ["S at 12:47:40 crossed 0.05 line…", "bg-[#ebebeb]"],
          ["40 pattern Bearish max Gartley", "bg-white"],
          ["1 at 12:47:22 CANN SSL TF H1", "bg-[#ebebeb]"],
        ].map(([t, c]) => (
          <div key={t} className={`flex h-[20px] items-center border-b border-b-[#d0d0d0] ${c}`}>{t}</div>
        ))}
      </div>
      <div className="flex w-[16px] shrink-0 flex-col items-center bg-[#f0f0f0]">
        <div className="flex h-[17px] items-center">
          <svg width={9} height={6} viewBox="0 0 9 6"><path d="M1 5l3.500 -3.500l3.500 3.500" stroke="#505050" strokeWidth={1.8} fill="none" /></svg>
        </div>
        <div className="h-[17px] w-full bg-[#cdcdcd]" />
        <div className="mt-auto flex h-[17px] items-center">
          <svg width={9} height={6} viewBox="0 0 9 6"><path d="M1 1l3.500 3.500l3.500 -3.500" stroke="#505050" strokeWidth={1.8} fill="none" /></svg>
        </div>
      </div>
    </div>
    <div className="mt-[10px] flex h-[21px] w-[40px] shrink-0 items-center border border-[#adadad] border-l-0 bg-[#e1e1e1]">OK</div>
  </div>
);

export default function App() {
  return (
    <div className="relative flex h-[728px] w-[1366px] flex-col overflow-hidden bg-[#f0f0f0] font-[family-name:Roboto,sans-serif]">
      <TopBars />
      <Toolbar />
      <div className="flex h-[612px] flex-col bg-[#a6a6a6] pt-[3px]">
        <MainChart />
        <SignalBar />
        <HistPane />
        <StochWrap />
        <RsiPane />
        <div className="grid h-[20px] grid-cols-[repeat(17,64px)] items-center pl-[4px] text-[10px] text-[#2f4f4f]">
          {TIMES.map((t) => <div key={t} className="whitespace-nowrap">{t}</div>)}
        </div>
      </div>
      <div className="h-[2px] bg-[#f0f0f0]" />
      <div className="h-px bg-black" />
      <Tabs />
      <StatusBar />
      <Annotations />
      <Dialog />
    </div>
  );
}
